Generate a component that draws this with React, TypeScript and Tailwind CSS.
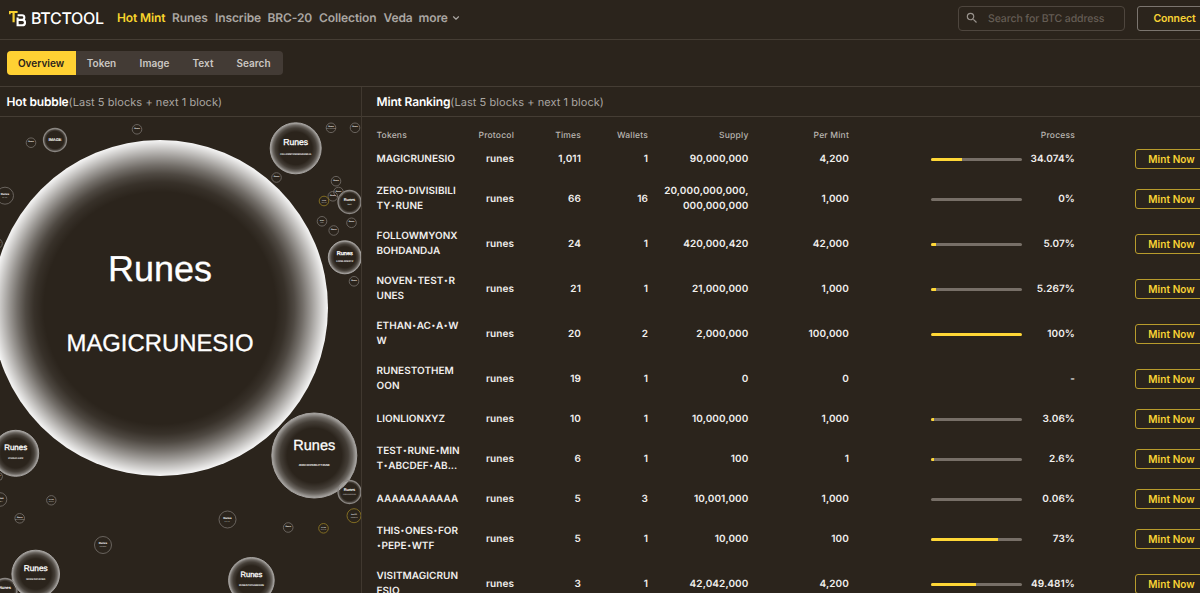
import { useState } from 'react';
import { ChevronDown } from 'lucide-react';
import { MdSearch } from 'react-icons/md';

interface Token {
  name: string[];
  times: string;
  wallets: string;
  supply: string[];
  perMint: string;
  process: string;
  // filled part of the bar in px, undefined when the token has no cap
  bar?: number;
}

interface Bubble {
  x: number;
  y: number;
  r: number;
  title: string;
  sub?: string;
  titleWidth: number;
  subWidth?: number;
  gold?: boolean;
}

const navItems = [
  { label: 'Hot Mint', width: 'w-[55px]' },
  { label: 'Runes', width: 'w-[43px]' },
  { label: 'Inscribe', width: 'w-[52.5px]' },
  { label: 'BRC-20', width: 'w-[51.5px]' },
  { label: 'Collection', width: 'w-[64.5px]' },
  { label: 'Veda', width: 'w-[35px]' },
];

const tabs = [
  { label: 'Overview', width: 'w-[69px]' },
  { label: 'Token', width: 'w-[52px]' },
  { label: 'Image', width: 'w-[54px]' },
  { label: 'Text', width: 'w-[43px]' },
  { label: 'Search', width: 'w-[58px]' },
];

const tokens: Token[] = [
  { name: ['MAGICRUNESIO'], times: '1,011', wallets: '1', supply: ['90,000,000'], perMint: '4,200', process: '34.074%', bar: 31 },
  { name: ['ZERO•DIVISIBILI', 'TY•RUNE'], times: '66', wallets: '16', supply: ['20,000,000,000,', '000,000,000'], perMint: '1,000', process: '0%', bar: 0 },
  { name: ['FOLLOWMYONX', 'BOHDANDJA'], times: '24', wallets: '1', supply: ['420,000,420'], perMint: '42,000', process: '5.07%', bar: 5 },
  { name: ['NOVEN•TEST•R', 'UNES'], times: '21', wallets: '1', supply: ['21,000,000'], perMint: '1,000', process: '5.267%', bar: 5 },
  { name: ['ETHAN•AC•A•W', 'W'], times: '20', wallets: '2', supply: ['2,000,000'], perMint: '100,000', process: '100%', bar: 91 },
  { name: ['RUNESTOTHEM', 'OON'], times: '19', wallets: '1', supply: ['0'], perMint: '0', process: '-' },
  { name: ['LIONLIONXYZ'], times: '10', wallets: '1', supply: ['10,000,000'], perMint: '1,000', process: '3.06%', bar: 3 },
  { name: ['TEST•RUNE•MIN', 'T•ABCDEF•AB...'], times: '6', wallets: '1', supply: ['100'], perMint: '1', process: '2.6%', bar: 3 },
  { name: ['AAAAAAAAAAA'], times: '5', wallets: '3', supply: ['10,001,000'], perMint: '1,000', process: '0.06%', bar: 0 },
  { name: ['THIS•ONES•FOR', '•PEPE•WTF'], times: '5', wallets: '1', supply: ['10,000'], perMint: '100', process: '73%', bar: 67 },
  { name: ['VISITMAGICRUN', 'ESIO'], times: '3', wallets: '1', supply: ['42,042,000'], perMint: '4,200', process: '49.481%', bar: 45 },
];

const bubbles: Bubble[] = [
  { x: 160, y: 308, r: 168, title: 'Runes', titleWidth: 104, sub: 'MAGICRUNESIO', subWidth: 187 },
  { x: 295.7, y: 148.3, r: 26, title: 'Runes', titleWidth: 25, sub: 'FOLLOWMYONXBOHDANDJA', subWidth: 31 },
  { x: 314.3, y: 455.5, r: 43, title: 'Runes', titleWidth: 42, sub: 'ZERO•DIVISIBILITY•RUNE', subWidth: 31 },
  { x: 344.8, y: 257.3, r: 17, title: 'Runes', titleWidth: 16, sub: 'LIONLIONXYZ', subWidth: 17 },
  { x: 349.5, y: 202, r: 12, title: 'Runes', titleWidth: 11.5, sub: 'TEST', subWidth: 5 },
  { x: 349.5, y: 492, r: 12, title: 'Runes', titleWidth: 11.5, sub: 'AAAAAAAAAAA', subWidth: 13 },
  { x: 15.7, y: 453.3, r: 23.5, title: 'Runes', titleWidth: 23, sub: 'ETHAN•AC•A•WW', subWidth: 15 },
  { x: 35.7, y: 574, r: 24.3, title: 'Runes', titleWidth: 24, sub: 'NOVEN•TEST•RUNES', subWidth: 19 },
  { x: 5, y: 590.5, r: 12.5, title: 'Runes', titleWidth: 12 },
  { x: 251.4, y: 580.3, r: 23.3, title: 'Runes', titleWidth: 22, sub: 'RUNESTOTHEMOON', subWidth: 25 },
  { x: 55, y: 140, r: 12, title: 'IMAGE', titleWidth: 13 },
  { x: 31, y: 142.7, r: 5.3, title: 'Runes', titleWidth: 5.5 },
  { x: 137, y: 129.3, r: 5.3, title: 'Runes', titleWidth: 5.5 },
  { x: 5, y: 195.7, r: 9, title: 'Runes', titleWidth: 8.5, sub: 'PEPE', subWidth: 6 },
  { x: -2.5, y: 243.5, r: 5.3, title: 'Runes', titleWidth: 5 },
  { x: 331, y: 127.8, r: 5.3, title: 'Runes', titleWidth: 5.5, sub: 'SATOSHI', subWidth: 9 },
  { x: 355, y: 127.8, r: 5.3, title: 'Runes', titleWidth: 5.5 },
  { x: 276.5, y: 177.5, r: 5.3, title: 'Runes', titleWidth: 5.5 },
  { x: 336, y: 181.2, r: 5.3, title: 'Runes', titleWidth: 5.5 },
  { x: 338.5, y: 192, r: 5.3, title: 'Runes', titleWidth: 5.5 },
  { x: 332.8, y: 196.3, r: 5.3, title: 'Runes', titleWidth: 5.5 },
  { x: 324, y: 201, r: 5.3, title: 'brc20', sub: 'SATS', titleWidth: 4, subWidth: 5, gold: true },
  { x: 322, y: 221.3, r: 5.3, title: 'Runes', sub: 'DOG', titleWidth: 4, subWidth: 4 },
  { x: 351.5, y: 222.8, r: 5.3, title: 'Runes', titleWidth: 5.5 },
  { x: 333.7, y: 230.5, r: 5.3, title: 'Runes', titleWidth: 5.5 },
  { x: 354, y: 281.3, r: 5.3, title: 'Runes', titleWidth: 5.5 },
  { x: -1.5, y: 476.5, r: 4.5, title: 'Runes', titleWidth: 4 },
  { x: 0, y: 499.5, r: 7.3, title: 'Runes', titleWidth: 7, sub: 'PUPS', subWidth: 5 },
  { x: 51.3, y: 500.3, r: 5.2, title: 'brc20', sub: 'ORDI', titleWidth: 4.5, subWidth: 5 },
  { x: 19.7, y: 518.3, r: 5.3, title: 'Runes', sub: 'BITCOIN', titleWidth: 5.5, subWidth: 9 },
  { x: 103, y: 545, r: 9, title: 'Runes', titleWidth: 8.5, sub: 'VISITMAGIC', subWidth: 7 },
  { x: 227.5, y: 519.5, r: 9, title: 'Runes', titleWidth: 8.5, sub: 'PEPE', subWidth: 6 },
  { x: 288.2, y: 527.5, r: 5.3, title: 'Runes', titleWidth: 5.5 },
  { x: 323.5, y: 528.3, r: 5.3, title: 'brc20', sub: 'SATS', titleWidth: 4.5, subWidth: 5.5, gold: true },
  { x: 354, y: 515.7, r: 7.5, title: 'brc20', sub: 'SATS', titleWidth: 5.5, subWidth: 7, gold: true },
];

function Logo() {
  return (
    <svg className="w-[17px] h-[17px] mr-[5px]" viewBox="0 0 17 17" fill="none">
      <path d="M0 2H8.6" stroke="#f8d12f" strokeWidth="2" />
      <path d="M0.6 1V4.2M4.6 2V12.2" stroke="#f8d12f" strokeWidth="2.2" />
      <path
        d="M8.6 5.2H13A2.3 2.3 0 0 1 13 9.9H8.6M13 9.9H13.3A2.6 2.6 0 0 1 13.3 15.3H8.6V7.5"
        stroke="#fff"
        strokeWidth="2.1"
      />
    </svg>
  );
}

function BubbleNode({ bubble }: { bubble: Bubble }) {
  const { x, y, r, title, sub, titleWidth, subWidth, gold } = bubble;
  const small = r < 10;
  const medium = r > 15 && r < 50;
  const fill = gold ? 'none' : r > 100 ? 'url(#glowLarge)' : r > 15 ? 'url(#glow)' : r > 10 ? 'url(#glowSmall)' : 'none';
  const stacked = small && sub && subWidth && subWidth <= 7 && r < 8;
  const titleSize = titleWidth / 2.89;
  const titleShift = small ? 0.08 : r > 100 ? 0.158 : 0.125;
  const titleY = title === 'IMAGE' ? y + 1.4 : stacked ? y - 0.5 : y - r * titleShift;

  return (
    <g fontFamily="Liberation Sans, Arial, sans-serif" fill="#fff" textAnchor="middle">
      <circle
        cx={x}
        cy={y}
        r={r > 100 ? r : r - 0.5}
        fill={fill}
        stroke={r > 100 ? 'none' : gold ? '#8a7423' : small ? '#6f6a64' : r < 15 ? '#8b8783' : '#a5a29f'}
        strokeWidth={small ? 0.9 : r < 15 ? 1.3 : 1}
      />
      <text
        x={x}
        y={titleY}
        fontSize={title === 'IMAGE' ? 4.2 : titleSize}
        fontWeight={r < 15 ? 700 : 400}
        textLength={titleWidth}
        stroke={medium || r > 100 ? '#fff' : 'none'}
        strokeWidth={0.3}
      >
        {title}
      </text>
      {sub && subWidth && (
        <text
          x={x}
          y={stacked ? y + 2 : r > 100 ? y + 43 : y + r * 0.25}
          fontSize={r > 100 ? 23.9 : r > 40 ? 3 : Math.min(2.6, r * 0.13 + 0.4)}
          fontWeight={medium ? 700 : 400}
          textLength={subWidth}
          lengthAdjust="spacingAndGlyphs"
          opacity={small ? 0.8 : 1}
          stroke={r > 100 ? '#fff' : 'none'}
          strokeWidth={0.3}
        >
          {sub}
        </text>
      )}
    </g>
  );
}

function HotBubble() {
  return (
    <svg className="block w-[361px] h-[476px]" viewBox="0 117 361 476">
      <defs>
        <radialGradient id="glowLarge">
          <stop offset="0.69" stopColor="#fff" stopOpacity="0" />
          <stop offset="0.75" stopColor="#fff" stopOpacity="0.06" />
          <stop offset="0.8" stopColor="#fff" stopOpacity="0.17" />
          <stop offset="0.85" stopColor="#fff" stopOpacity="0.34" />
          <stop offset="0.9" stopColor="#fff" stopOpacity="0.54" />
          <stop offset="0.95" stopColor="#fff" stopOpacity="0.75" />
          <stop offset="1" stopColor="#fff" stopOpacity="0.96" />
        </radialGradient>
        <radialGradient id="glow">
          <stop offset="0.64" stopColor="#fff" stopOpacity="0" />
          <stop offset="0.8" stopColor="#fff" stopOpacity="0.12" />
          <stop offset="0.9" stopColor="#fff" stopOpacity="0.3" />
          <stop offset="1" stopColor="#fff" stopOpacity="0.62" />
        </radialGradient>
        <radialGradient id="glowSmall">
          <stop offset="0.76" stopColor="#fff" stopOpacity="0" />
          <stop offset="1" stopColor="#fff" stopOpacity="0.28" />
        </radialGradient>
      </defs>
      {bubbles.map((b, i) => (
        <BubbleNode key={i} bubble={b} />
      ))}
    </svg>
  );
}

function TokenRow({ token }: { token: Token }) {
  return (
    <div className="flex items-center py-[7.5px] text-[10px] leading-[15px] font-semibold tracking-[0.09px] text-[#f1efed] *:shrink-0">
      <div className="w-[83px] whitespace-nowrap tracking-[0.03px]">
        {token.name.map((line) => (
          <div key={line} className="h-[15px]">
            {line.split('•').map((part, i) => (
              <span key={i}>
                {i > 0 && <span className="text-[7.5px] leading-none align-[1px] mx-[0.6px]">•</span>}
                {part}
              </span>
            ))}
          </div>
        ))}
      </div>
      <div className="w-[54.5px] text-right">runes</div>
      <div className="w-[67px] text-right">{token.times}</div>
      <div className="w-[67px] text-right">{token.wallets}</div>
      <div className="w-[100.5px] text-right">
        {token.supply.map((line) => (
          <div key={line}>{line}</div>
        ))}
      </div>
      <div className="w-[100.5px] text-right">{token.perMint}</div>
      <div className="w-[226px] flex items-center justify-end">
        {token.bar !== undefined && (
          <div className="w-[91px] h-[3px] rounded-full bg-[#776f67] overflow-hidden">
            <div className="h-full bg-[#ffd736]" style={{ width: token.bar }} />
          </div>
        )}
        <div className="w-[53px] text-right">{token.process}</div>
      </div>
      <button className="ml-[60px] w-[73px] h-5 border border-[#b89c2c] rounded-[3px] text-[#f9d335] whitespace-nowrap flex items-center justify-center">
        Mint Now
      </button>
    </div>
  );
}

export default function App() {
  const [activeTab, setActiveTab] = useState('Overview');

  return (
    <div className="w-[1200px] h-[593px] overflow-hidden bg-[#2b241c] font-[Inter,sans-serif] [text-rendering:geometricPrecision] text-white flex flex-col">
      {/* Header */}
      <header className="h-10 shrink-0 border-b border-[#453d34] flex items-center pl-[9px] pb-[3px]">
        <Logo />
        <span className="w-[86px] text-[16px] font-medium tracking-[-0.3px]">BTCTOOL</span>
        <nav className="flex items-center text-[12px] font-semibold tracking-[-0.1px] text-[#aaa6a2]">
          {navItems.map((item, i) => (
            <a key={item.label} className={`${item.width} whitespace-nowrap ${i === 0 ? 'text-[#f9d52c]' : ''}`}>
              {item.label}
            </a>
          ))}
          <a className="flex items-center gap-[3px]">
            more
            <ChevronDown className="w-[10px] h-[10px]" strokeWidth={2.8} />
          </a>
        </nav>
        <div className="ml-auto shrink-0 w-[167px] h-[25px] border border-[#4e463e] rounded-[4px] flex items-center pl-[6px]">
          <MdSearch className="w-[14px] h-[14px] text-[#99938d]" />
          <span className="ml-[9px] pt-px text-[10.5px] font-medium tracking-[-0.1px] text-[#655d55]">Search for BTC address</span>
        </div>
        <button className="ml-[12px] -mr-[12px] shrink-0 w-[75px] h-[25px] pt-px border border-[#7b756f] rounded-[3px] text-[10.5px] font-semibold tracking-[-0.15px] text-[#f9d335]">
          Connect
        </button>
      </header>

      {/* Tabs */}
      <div className="h-[47px] shrink-0 border-b border-[#453d34] flex items-center pl-[6.5px]">
        <div className="flex h-6 rounded-[4px] overflow-hidden bg-[#433b35]">
          {tabs.map((tab) => (
            <button
              key={tab.label}
              onClick={() => setActiveTab(tab.label)}
              className={`${tab.width} pt-px text-[10px] font-semibold tracking-[0.02px] ${
                activeTab === tab.label ? 'bg-[#ffd133] text-[#2b231b]' : 'text-[#cbc7c3]'
              }`}
            >
              {tab.label}
            </button>
          ))}
        </div>
      </div>

      <div className="flex flex-1 min-h-0">
        {/* Bubble chart */}
        <section className="w-[362px] shrink-0 border-r border-[#40382f]">
          <h2 className="h-[30px] border-b border-[#453d34] pl-[6.5px] pt-px flex items-center text-[12px] font-semibold tracking-[-0.15px] whitespace-nowrap">
            Hot bubble
            <span className="text-[11px] font-normal tracking-[0.06px] text-[#aaa6a2]">(Last 5 blocks + next 1 block)</span>
          </h2>
          <HotBubble />
        </section>

        {/* Ranking */}
        <section className="flex-1 min-w-0">
          <h2 className="h-[30px] border-b border-[#453d34] pl-[14.5px] pt-px flex items-center text-[12px] font-semibold tracking-[-0.15px] whitespace-nowrap">
            Mint Ranking
            <span className="text-[11px] font-normal tracking-[0.06px] text-[#aaa6a2]">(Last 5 blocks + next 1 block)</span>
          </h2>
          <div className="pl-[14.5px] pt-[14px]">
            <div className="flex h-[10.5px] items-center text-[8.5px] font-medium tracking-[0.2px] text-[#b9b5b1] *:shrink-0">
              <div className="w-[83px]">Tokens</div>
              <div className="w-[54.5px] text-right">Protocol</div>
              <div className="w-[67px] text-right">Times</div>
              <div className="w-[67px] text-right">Wallets</div>
              <div className="w-[100.5px] text-right">Supply</div>
              <div className="w-[100.5px] text-right">Per Mint</div>
              <div className="w-[226px] text-right">Process</div>
            </div>
            {tokens.map((token) => (
              <TokenRow key={token.name[0]} token={token} />
            ))}
          </div>
        </section>
      </div>
    </div>
  );
}
